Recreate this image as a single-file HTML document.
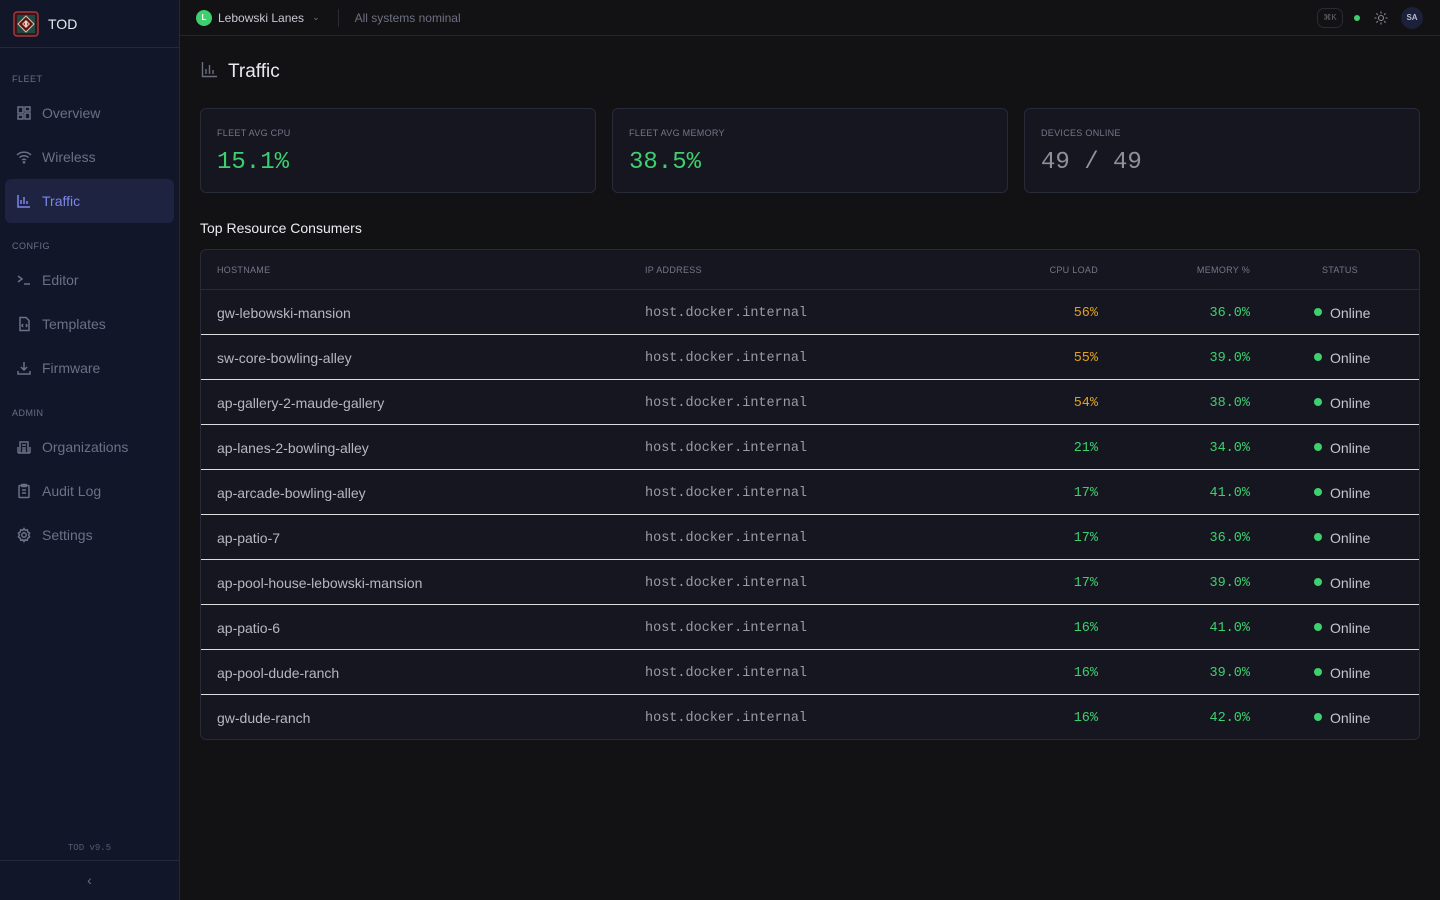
<!DOCTYPE html>
<html><head><meta charset="utf-8"><style>
*{box-sizing:border-box;margin:0;padding:0}
body{width:1440px;height:900px;background:#121214;font-family:"Liberation Sans",sans-serif;color:#d4d4dc;overflow:hidden;position:relative}
.sb{position:absolute;left:0;top:0;width:180px;height:900px;background:#111729;border-right:1px solid #23283a}
.logo{height:48px;border-bottom:1px solid #23283a;display:flex;align-items:center;padding-left:13px}
.logo span{color:#e8e8ee;font-size:14px;margin-left:9px}
.sec{font-size:9px;height:10px;line-height:10px;color:#6b7085;letter-spacing:.5px;padding-left:12px}
.it{display:flex;align-items:center;height:44px;margin:0 5px;padding-left:11px;font-size:14px;color:#6b7186;border-radius:6px}
.it svg{width:16px;height:16px;margin-right:10px;stroke:#6b7186;fill:none;stroke-width:1.5}
.it.act{background:#1d2340;color:#7c86e8}
.it.act svg{stroke:#7c86e8}
.ver{position:absolute;top:843px;width:100%;text-align:center;font:9px "Liberation Mono",monospace;color:#555b70}
.col{position:absolute;top:860px;width:100%;height:40px;border-top:1px solid #23283a;text-align:center;color:#6b7186;line-height:38px;font-size:14px}
.top{position:absolute;left:180px;top:0;right:0;height:36px;border-bottom:1px solid #25262c;display:flex;align-items:center;font-size:12px}
.card{position:absolute;top:108px;width:396px;height:85px;border:1px solid #272a38;border-radius:6px;background:#151620}
.card .l{position:absolute;left:16px;top:19px;font-size:9px;color:#737789;letter-spacing:.3px}
.card .v{position:absolute;left:16px;top:40px;font:24px "Liberation Mono",monospace;color:#3ecf6e}
.tbl{position:absolute;left:200px;top:249px;width:1220px;height:491px;border:1px solid #272a38;border-radius:6px;background:#151620;overflow:hidden}
.th{height:40px;border-bottom:1px solid #272a38;position:relative;font-size:9px;color:#737789;letter-spacing:.3px}
.th div,.r div{position:absolute}
.r{height:45px;border-bottom:1px solid #dcdce0;position:relative;font-size:14px}
.mono{font-family:"Liberation Mono",monospace;font-size:13.5px}
</style></head><body>
<div class="sb">
<div class="logo"><svg width="26" height="26" viewBox="0 0 26 26"><rect x="1" y="1" width="24" height="24" rx="3" fill="#3a1418" stroke="#a33a3a" stroke-width="1.5"/><rect x="4" y="4" width="18" height="18" fill="#1f4a44"/><path d="M13 5 L21 13 L13 21 L5 13Z" fill="#5a1414" stroke="#e0c0b0" stroke-width="1"/><path d="M13 9 L17 13 L13 17 L9 13Z" fill="#e8d0c0"/><path d="M10 13 L12 11.5 V14.5Z M16 13 L14 11.5 V14.5Z" fill="#c03030"/></svg><span>TOD</span></div>
<div class="sec" style="margin-top:26px">FLEET</div>
<div class="it" style="margin-top:7px"><svg viewBox="0 0 16 16"><rect x="2" y="2" width="5" height="6"/><rect x="9" y="2" width="5" height="4"/><rect x="2" y="10" width="5" height="4"/><rect x="9" y="8" width="5" height="6"/></svg>Overview</div>
<div class="it"><svg viewBox="0 0 16 16"><path d="M1 6a10 10 0 0 1 14 0M3.5 8.5a6.5 6.5 0 0 1 9 0M6 11a3 3 0 0 1 4 0"/><circle cx="8" cy="13.3" r=".6"/></svg>Wireless</div>
<div class="it act"><svg viewBox="0 0 16 16"><path d="M2 2v12h12M5 11V7M8 11V4M11 11V8"/></svg>Traffic</div>
<div class="sec" style="margin-top:18px">CONFIG</div>
<div class="it" style="margin-top:7px"><svg viewBox="0 0 16 16"><path d="M2 4l4 3-4 3M8 12h6"/></svg>Editor</div>
<div class="it"><svg viewBox="0 0 16 16"><path d="M4 1.5h6l3 3v10H4z"/><path d="M7 8l-1 1.5 1 1.5M10 8l1 1.5-1 1.5"/></svg>Templates</div>
<div class="it"><svg viewBox="0 0 16 16"><path d="M8 2v8M5 7l3 3 3-3M2 11v3h12v-3"/></svg>Firmware</div>
<div class="sec" style="margin-top:18px">ADMIN</div>
<div class="it" style="margin-top:7px"><svg viewBox="0 0 16 16"><path d="M4 14V3h8v11M2 14h12M2 8v6M14 8v6M6 6h4M6 9h4M7 14v-3h2v3"/></svg>Organizations</div>
<div class="it"><svg viewBox="0 0 16 16"><rect x="3" y="2.5" width="10" height="12" rx="1"/><path d="M6 1.5h4v2H6zM6 7h4M6 10h4"/></svg>Audit Log</div>
<div class="it"><svg viewBox="0 0 16 16"><circle cx="8" cy="8" r="2.2"/><path d="M8 1.5l1.2 1.8 2.1-.5.5 2.1 1.8 1.2-1 1.9 1 1.9-1.8 1.2-.5 2.1-2.1-.5L8 14.5l-1.2-1.8-2.1.5-.5-2.1-1.8-1.2 1-1.900-1-1.9 1.8-1.2.5-2.1 2.1.5z"/></svg>Settings</div>
<div class="ver">TOD v9.5</div>
<div class="col">‹</div>
</div>
<div class="top">
<div style="margin-left:16px;width:16px;height:16px;border-radius:50%;background:#3ecf6e;color:#fff;font-size:8px;text-align:center;line-height:16px;font-weight:bold">L</div>
<span style="margin-left:6px;color:#c8c8d0">Lebowski Lanes</span><span style="margin-left:8px;color:#777;font-size:9px">⌄</span>
<div style="width:1px;height:18px;background:#2a2b33;margin:0 16px 0 18px"></div>
<span style="color:#6e7082">All systems nominal</span>
<div style="margin-left:auto;width:26px;height:20px;border:1px solid #2a2b33;border-radius:7px;font-size:8px;color:#666;text-align:center;line-height:18px">⌘K</div>
<div style="width:6px;height:6px;border-radius:50%;background:#3ecf6e;margin-left:11px"></div>
<svg width="14" height="14" viewBox="0 0 14 14" style="margin-left:14px" stroke="#8a8c98" fill="none" stroke-width="1.1"><circle cx="7" cy="7" r="2.5"/><path d="M7 0.5v2M7 11.5v2M0.5 7h2M11.5 7h2M2.4 2.4l1.4 1.4M10.2 10.2l1.4 1.4M2.4 11.6l1.4-1.4M10.2 3.8l1.4-1.4"/></svg>
<div style="width:22px;height:22px;border-radius:50%;background:#1c2038;color:#b8bccf;font-size:8px;text-align:center;line-height:22px;margin:0 17px 0 13px;font-weight:bold">SA</div>
</div>
<svg style="position:absolute;left:201px;top:61px" width="17" height="17" viewBox="0 0 17 17" stroke="#6b6e80" fill="none" stroke-width="1.4"><path d="M1.5 1v14.5H16M5 13V8M8.5 13V4M12 13V9"/></svg>
<div style="position:absolute;left:228px;top:61px;font-size:19px;color:#e8e8ee">Traffic</div>
<div class="card" style="left:200px"><div class="l">FLEET AVG CPU</div><div class="v">15.1%</div></div>
<div class="card" style="left:612px"><div class="l">FLEET AVG MEMORY</div><div class="v">38.5%</div></div>
<div class="card" style="left:1024px"><div class="l">DEVICES ONLINE</div><div class="v" style="color:#8e909e">49 / 49</div></div>
<div style="position:absolute;left:200px;top:220px;font-size:14px;color:#ececf0">Top Resource Consumers</div>
<div class="tbl">
<div class="th"><div style="left:16px;top:15px">HOSTNAME</div><div style="left:444px;top:15px">IP ADDRESS</div><div style="right:321px;top:15px">CPU LOAD</div><div style="right:169px;top:15px">MEMORY %</div><div style="left:1121px;top:15px">STATUS</div></div>
<div id="rows"></div>
</div>
<script>
var d=[["gw-lebowski-mansion","56%","36.0%",1],["sw-core-bowling-alley","55%","39.0%",1],["ap-gallery-2-maude-gallery","54%","38.0%",1],["ap-lanes-2-bowling-alley","21%","34.0%"],["ap-arcade-bowling-alley","17%","41.0%"],["ap-patio-7","17%","36.0%"],["ap-pool-house-lebowski-mansion","17%","39.0%"],["ap-patio-6","16%","41.0%"],["ap-pool-dude-ranch","16%","39.0%"],["gw-dude-ranch","16%","42.0%"]];
var h="";d.forEach(function(r){h+='<div class="r"><div style="left:16px;top:15px;color:#b6b7c2">'+r[0]+'</div><div class="mono" style="left:444px;top:16px;color:#9a9ba8">host.docker.internal</div><div class="mono" style="right:321px;top:16px;color:'+(r[3]?'#e0a020':'#3ecf6e')+'">'+r[1]+'</div><div class="mono" style="right:169px;top:16px;color:#3ecf6e">'+r[2]+'</div><div style="left:1113px;top:18px;width:8px;height:8px;border-radius:50%;background:#3ecf6e"></div><div style="left:1129px;top:15px;color:#c4c5cf">Online</div></div>'});
document.getElementById("rows").innerHTML=h;
</script>
</body></html>
